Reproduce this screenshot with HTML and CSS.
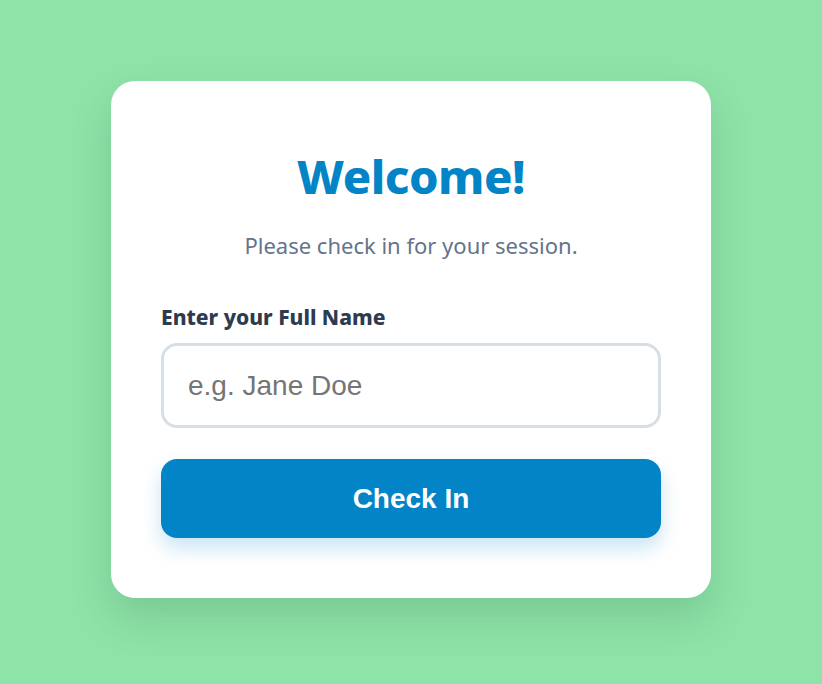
FILE: index.html
```html
<!DOCTYPE html>
<html lang="en">
<head>
<meta charset="utf-8">
<title>Check In</title>
<link rel="stylesheet" href="styles.css">
</head>
<body>
<main class="card">
  <h1 class="title">Welcome!</h1>
  <p class="subtitle">Please check in for your session.</p>
  <form class="form">
    <label class="label" for="name">Enter your Full Name</label>
    <input class="input" id="name" type="text" placeholder="e.g. Jane Doe">
    <button class="button" type="button">Check In</button>
  </form>
</main>
</body>
</html>
```
FILE: styles.css
```css
html, body {
  margin: 0;
  padding: 0;
}
body {
  min-height: 100vh;
  background: #8ee3a9;
  display: flex;
  align-items: center;
  justify-content: center;
  font-family: "Noto Sans", "Open Sans", sans-serif;
}
.card {
  box-sizing: border-box;
  width: 600px;
  height: 517px;
  margin-bottom: 5px;
  background: #ffffff;
  border-radius: 24px;
  padding: 50px 50px 0;
  box-shadow: 0 20px 40px rgba(0, 60, 20, 0.15);
  text-align: center;
  display: flex;
  flex-direction: column;
}
.title {
  margin: 17px 0 0;
  font-size: 47px;
  line-height: 56px;
  font-weight: 800;
  color: #0284c7;
  letter-spacing: -0.5px;
}
.subtitle {
  margin: 26px 0 0;
  font-size: 22px;
  line-height: 30px;
  color: #64748b;
}
.form {
  display: flex;
  flex-direction: column;
  text-align: left;
  margin-top: 44px;
}
.label {
  font-size: 21px;
  line-height: 26px;
  font-weight: 800;
  color: #2d3b50;
  margin-bottom: 13px;
}
.input {
  box-sizing: border-box;
  height: 85px;
  border: 3px solid #d6dee6;
  border-radius: 16px;
  padding: 0 24px;
  font-family: "Liberation Sans", Arial, sans-serif;
  font-size: 28px;
  color: #333;
  outline: none;
}
.input::placeholder {
  color: #757575;
}
.button {
  margin-top: 31px;
  height: 79px;
  border: none;
  border-radius: 16px;
  background: #0284c7;
  color: #ffffff;
  font-family: "Liberation Sans", Arial, sans-serif;
  font-size: 28px;
  font-weight: 700;
  box-shadow: 0 10px 20px rgba(2, 132, 199, 0.22);
  cursor: pointer;
}
```
